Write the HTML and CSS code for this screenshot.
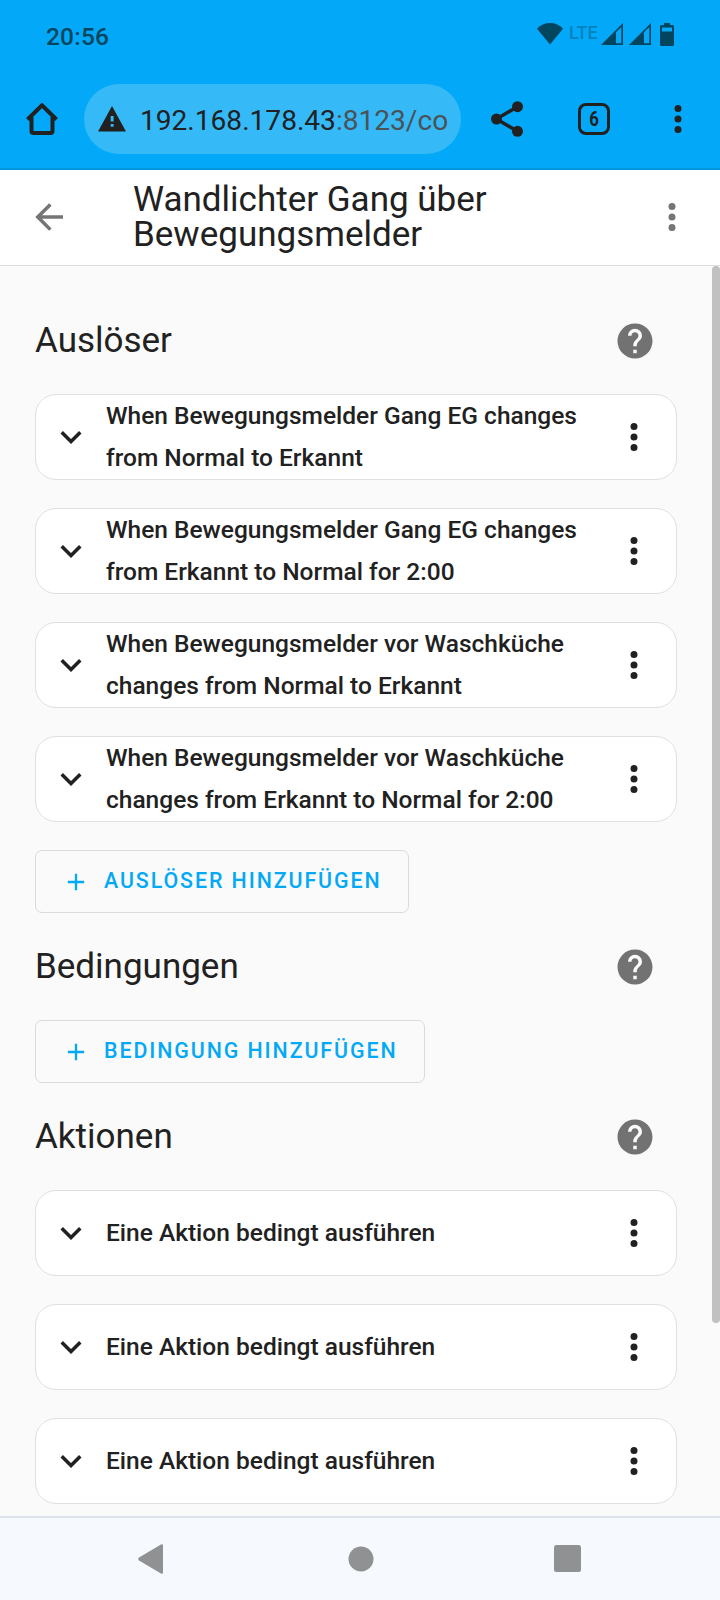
FILE: index.html
```
<!DOCTYPE html>
<html lang="de">
<head>
	<title>Wandlichter Gang über Bewegungsmelder</title>
	<meta charset="utf-8"/>
	<link rel="stylesheet" href="styles.css">
</head>
<body>
	<svg width="0" height="0" class="defs">
		<symbol id="chevron" viewBox="0 0 24 24"><path d="M7.41,8.58L12,13.17L16.59,8.58L18,10L12,16L6,10L7.41,8.58Z"/></symbol>
		<symbol id="dots" viewBox="0 0 24 24"><path d="M12,16A2,2 0 0,1 14,18A2,2 0 0,1 12,20A2,2 0 0,1 10,18A2,2 0 0,1 12,16M12,10A2,2 0 0,1 14,12A2,2 0 0,1 12,14A2,2 0 0,1 10,12A2,2 0 0,1 12,10M12,4A2,2 0 0,1 14,6A2,2 0 0,1 12,8A2,2 0 0,1 10,6A2,2 0 0,1 12,4Z"/></symbol>
		<symbol id="help" viewBox="0 0 24 24"><path d="M15.07,11.25L14.17,12.17C13.45,12.89 13,13.5 13,15H11V14.5C11,13.39 11.45,12.39 12.17,11.67L13.41,10.41C13.78,10.05 14,9.55 14,9C14,7.89 13.1,7 12,7A2,2 0 0,0 10,9H8A4,4 0 0,1 12,5A4,4 0 0,1 16,9C16,9.88 15.64,10.67 15.07,11.25M13,19H11V17H13M12,2A10,10 0 0,0 2,12A10,10 0 0,0 12,22A10,10 0 0,0 22,12C22,6.47 17.5,2 12,2Z"/></symbol>
		<symbol id="plus" viewBox="0 0 24 24"><path d="M19,13H13V19H11V13H5V11H11V5H13V11H19V13Z"/></symbol>
		<symbol id="back" viewBox="0 0 24 24"><path d="M20,11V13H8L13.5,18.5L12.08,19.92L4.16,12L12.08,4.08L13.5,5.5L8,11H20Z"/></symbol>
		<symbol id="signal" viewBox="0 0 22 22"><path fill-rule="evenodd" d="M0,22L22,0V22ZM15,9.2V20.2H20.3V4Z"/></symbol>
	</svg>

	<div class="browser">
		<div class="status">
			<span class="time">20:56</span>
			<svg class="wifi" width="26" height="22" viewBox="0 0 26 22"><path d="M13,21.5L0,5.8C3.4,2 8,0 13,0S22.600,2 26,5.800Z"/></svg>
			<span class="lte">LTE</span>
			<svg class="signal" width="22" height="22"><use href="#signal"/></svg>
			<svg class="signal" width="22" height="22"><use href="#signal"/></svg>
			<svg class="battery" width="14" height="23" viewBox="0 0 14 23"><path fill-rule="evenodd" d="M4,0H10V2H12.500Q14,2 14,3.500V21.500Q14,23 12.500,23H1.500Q0,23 0,21.500V3.500Q0,2 1.500,2H4ZM2,4.500V8.500H12V4.500Z"/></svg>
		</div>
		<div class="toolbar">
			<svg class="home" width="32" height="32" viewBox="0 0 32 32"><path d="M1.500,16.500L16,2.300L30.500,16.500M5.500,14V28Q5.500,30 7.500,30H24.500Q26.500,30 26.500,28V14"/></svg>
			<div class="address">
				<svg class="warning" width="28" height="26" viewBox="0 0 28 26"><path fill-rule="evenodd" d="M14,0L28,25.500H0ZM12.700,10V15.500H15.600V10ZM12.700,18V20.800H15.600V18Z"/></svg>
				<span class="url">192.168.178.43<span class="path">:8123/co</span></span>
			</div>
			<svg class="share" width="32" height="36" viewBox="0 0 32 36"><path d="M26.500,5.700L5.500,18L26.500,30.300"/><circle cx="26.500" cy="5.700" r="5.500"/><circle cx="5.500" cy="18" r="5.500"/><circle cx="26.500" cy="30.300" r="5.500"/></svg>
			<div class="tabs"><span>6</span></div>
			<svg class="more" width="42" height="42"><use href="#dots"/></svg>
		</div>
	</div>

	<header class="header">
		<svg width="42" height="42"><use href="#back"/></svg>
		<h1>Wandlichter Gang über Bewegungsmelder</h1>
		<svg width="42" height="42"><use href="#dots"/></svg>
	</header>

	<main class="content">
		<div class="section">
			<h2>Auslöser</h2>
			<svg class="help" width="42" height="42"><use href="#help"/></svg>
		</div>
		<div class="list">
			<div class="card">
				<svg width="42" height="42"><use href="#chevron"/></svg>
				<h3>When Bewegungsmelder Gang EG changes<br>from Normal to Erkannt</h3>
				<svg width="42" height="42"><use href="#dots"/></svg>
			</div>
			<div class="card">
				<svg width="42" height="42"><use href="#chevron"/></svg>
				<h3>When Bewegungsmelder Gang EG changes<br>from Erkannt to Normal for 2:00</h3>
				<svg width="42" height="42"><use href="#dots"/></svg>
			</div>
			<div class="card">
				<svg width="42" height="42"><use href="#chevron"/></svg>
				<h3>When Bewegungsmelder vor Waschküche<br>changes from Normal to Erkannt</h3>
				<svg width="42" height="42"><use href="#dots"/></svg>
			</div>
			<div class="card">
				<svg width="42" height="42"><use href="#chevron"/></svg>
				<h3>When Bewegungsmelder vor Waschküche<br>changes from Erkannt to Normal for 2:00</h3>
				<svg width="42" height="42"><use href="#dots"/></svg>
			</div>
			<button class="add"><svg width="28" height="28"><use href="#plus"/></svg><span>Auslöser hinzufügen</span></button>
		</div>

		<div class="section">
			<h2>Bedingungen</h2>
			<svg class="help" width="42" height="42"><use href="#help"/></svg>
		</div>
		<div class="list">
			<button class="add wide"><svg width="28" height="28"><use href="#plus"/></svg><span>Bedingung hinzufügen</span></button>
		</div>

		<div class="section">
			<h2>Aktionen</h2>
			<svg class="help" width="42" height="42"><use href="#help"/></svg>
		</div>
		<div class="list">
			<div class="card">
				<svg width="42" height="42"><use href="#chevron"/></svg>
				<h3>Eine Aktion bedingt ausführen</h3>
				<svg width="42" height="42"><use href="#dots"/></svg>
			</div>
			<div class="card">
				<svg width="42" height="42"><use href="#chevron"/></svg>
				<h3>Eine Aktion bedingt ausführen</h3>
				<svg width="42" height="42"><use href="#dots"/></svg>
			</div>
			<div class="card">
				<svg width="42" height="42"><use href="#chevron"/></svg>
				<h3>Eine Aktion bedingt ausführen</h3>
				<svg width="42" height="42"><use href="#dots"/></svg>
			</div>
		</div>
		<div class="scrollbar"></div>
	</main>

	<nav class="nav">
		<svg width="26" height="30" viewBox="0 0 26 30"><path d="M1,13.500L23,.6Q25,-.3 25,1.500V28.500Q25,30.300 23,29.400L1,16.500Q-.5,15 1,13.500Z"/></svg>
		<svg class="circle" width="26" height="26" viewBox="0 0 26 26"><circle cx="13" cy="13" r="12.500"/></svg>
		<svg width="27" height="27" viewBox="0 0 27 27"><rect width="27" height="27" rx="2.500"/></svg>
	</nav>
</body>
</html>
```
FILE: styles.css
```
body {
	background: #fafafa;
	color: #212121;
	display: flex;
	flex-direction: column;
	font-family: Roboto, sans-serif;
	height: 1600px;
	margin: 0;
	overflow: hidden;
	width: 720px;
}

h1, h2, h3 {
	font-weight: 400;
	margin: 0;
}

svg {
	display: block;
	fill: currentColor;
	flex: none;
}

.defs {position: absolute}

.browser {
	background: #03a9f8;
	border-bottom: 2px solid #0398de;
	box-sizing: border-box;
	flex: none;
	height: 170px;
}

.status {
	align-items: flex-start;
	box-sizing: border-box;
	color: #02455f;
	display: flex;
	height: 84px;
	padding: 23px 46px 0;
}

.time {
	font-size: 24.5px;
	font-weight: 500;
	letter-spacing: 0.2px;
	line-height: 27px;
	margin-right: auto;
}

.lte {
	color: #0382be;
	font-size: 18px;
	font-weight: 500;
	line-height: 19px;
	margin: 0 4px 0 6px;
	width: 28px;
}

.signal + .signal {margin-left: 6px}
.battery          {margin-left: 9px}

.toolbar {
	align-items: center;
	display: flex;
	height: 70px;
	padding-left: 26px;
}

.home {
	fill: none;
	stroke: currentColor;
	stroke-width: 4;
}

.address {
	align-items: center;
	background: #36b9f7;
	border-radius: 35px;
	box-sizing: border-box;
	display: flex;
	height: 70px;
	margin-left: 26px;
	padding: 0 14px;
	width: 377px;
}

.url {
	flex: 1;
	font-size: 28.1px;
	line-height: 36px;
	margin: 3px 0 0 14px;
	overflow: hidden;
	white-space: nowrap;
}

.path {color: #4a5256}

.share {margin-left: 30px}

.share path {
	fill: none;
	stroke: currentColor;
	stroke-width: 3.5;
}

.tabs {
	border: 3.500px solid #212121;
	border-radius: 8px;
	box-sizing: border-box;
	font-size: 21px;
	font-weight: 700;
	height: 32px;
	line-height: 26px;
	margin-left: 55px;
	text-align: center;
	width: 32px;
}

.tabs span {
	display: block;
	transform: scaleX(0.8);
}

.more {margin-left: 47px}

.header {
	align-items: center;
	background: #fff;
	border-bottom: 1px solid #dcdcdc;
	box-sizing: border-box;
	display: flex;
	flex: none;
	height: 96px;
	padding: 0 27px 2px 28px;
}

.header svg {color: #757575}

.header h1 {
	flex: 1;
	font-size: 35px;
	line-height: 35px;
	margin-left: 63px;
	padding-right: 120px;
}

.content {
	flex: 1;
	min-height: 0;
	overflow: hidden;
	padding: 21px 43px 0 35px;
	position: relative;
}

.section {
	align-items: center;
	display: flex;
	height: 107px;
	justify-content: space-between;
	padding-right: 21px;
}

.section h2 {
	font-size: 35px;
	line-height: 48px;
}

.help {color: #727272}

.list {
	align-items: flex-start;
	display: flex;
	flex-direction: column;
	gap: 28px;
}

.card {
	align-items: center;
	align-self: stretch;
	background: #fff;
	border: 1px solid #e0e0e0;
	border-radius: 21px;
	box-sizing: border-box;
	display: flex;
	height: 86px;
	padding: 0 21px 0 14px;
}

.card h3 {
	flex: 1;
	font-size: 24.5px;
	font-weight: 500;
	line-height: 42px;
	margin-left: 14px;
	white-space: nowrap;
}

.add {
	align-items: center;
	background: none;
	border: 1px solid #dadada;
	border-radius: 7px;
	box-sizing: border-box;
	color: #03a9f4;
	display: flex;
	font: 500 21.4px/40px Roboto, sans-serif;
	gap: 14px;
	height: 63px;
	letter-spacing: 1.91px;
	padding: 0 0 0 26px;
	text-transform: uppercase;
	white-space: nowrap;
	width: 374px;
}

.add span {padding-bottom: 2px}

.wide {width: 390px}

.scrollbar {
	background: #c1c1c1;
	border-radius: 4px;
	height: 1057px;
	position: absolute;
	right: 0;
	top: 0;
	width: 8px;
}

.nav {
	align-items: center;
	background: #f6f9fe;
	border-top: 2px solid #dce2ec;
	box-sizing: border-box;
	color: #909193;
	display: flex;
	flex: none;
	height: 84px;
	justify-content: space-between;
	padding: 0 139px 1px 138px;
}

.circle {margin-left: 3px}
```
